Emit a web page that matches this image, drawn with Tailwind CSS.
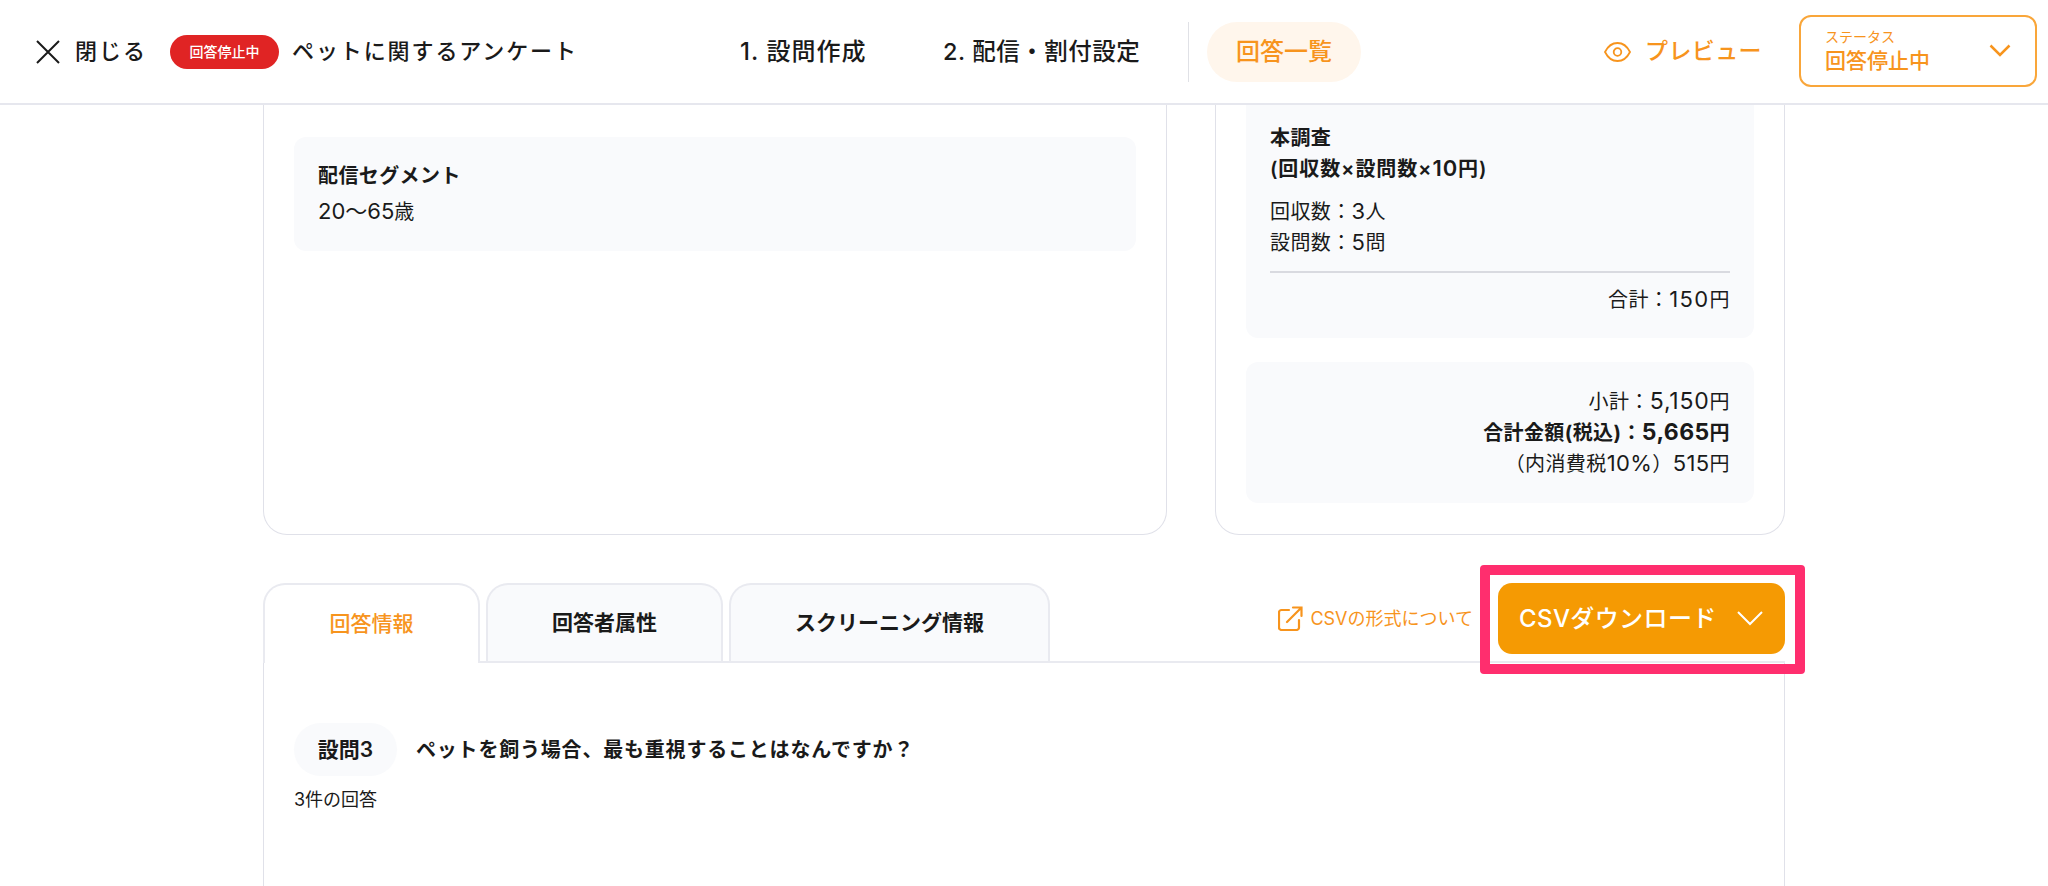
<!DOCTYPE html>
<html lang="ja">
<head>
    <meta charset="UTF-8">
    <title>ペットに関するアンケート</title>
    <script src="https://cdn.jsdelivr.net/npm/@tailwindcss/browser@4"></script>
</head>
<body class="h-[886px] overflow-hidden bg-white text-[#1a1a1a] font-['Inter','Noto_Sans_CJK_JP',sans-serif]">
    <!-- header -->
    <header class="h-[105px] border-b-2 border-[#e6e7ee] flex items-center pl-[36px] pr-[10px]">
        <button class="flex items-center gap-[16px] text-[22px] font-medium w-[134px] shrink-0">
            <svg class="w-[24px] h-[24px]" viewBox="0 0 24 24" fill="none" stroke="#1a1a1a" stroke-width="2"><path d="M1 1l22 22M23 1L1 23"/></svg>
            <span class="tracking-[2px] -ml-[1px]">閉じる</span>
        </button>
        <span class="w-[109px] h-[34px] rounded-full bg-[#e02424] text-white text-[14px] font-medium flex items-center justify-center shrink-0">回答停止中</span>
        <h1 class="ml-[13px] w-[448px] shrink-0 text-[22px] font-medium tracking-[1.9px]">ペットに関するアンケート</h1>
        <nav class="flex items-center font-medium">
            <a class="w-[203px] text-[24px] tracking-[1px]">1. 設問作成</a>
            <a class="w-[245px] text-[23.5px] tracking-[0.5px]">2. 配信・割付設定</a>
            <span class="h-[60px] border-l border-[#e0e1e6]"></span>
            <a class="ml-[18px] w-[154px] h-[60px] rounded-full bg-[#fff6ec] text-[#f7941d] text-[24px] flex items-center justify-center">回答一覧</a>
        </nav>
        <div class="ml-[243px] flex items-center gap-[14px] text-[#f7941d] text-[23px] font-medium tracking-[0.4px]">
            <svg class="w-[27px] h-[20px]" viewBox="0 0 27 20" fill="none" stroke="#f7941d" stroke-width="1.8"><path d="M1 10C4 4 8 1 13.500 1S23 4 26 10c-3 6-7 9-12.500 9S4 16 1 10z"/><circle cx="13.500" cy="10" r="3.800"/></svg>
            <span>プレビュー</span>
        </div>
        <div class="ml-[37px] -mt-[2px] w-[238px] h-[72px] border-2 border-[#f9a63a] rounded-[12px] flex items-center justify-between pl-[24px] pr-[24px] text-[#f7941d]">
            <div class="flex flex-col pt-[2px]">
                <span class="text-[14px] leading-[18px]">ステータス</span>
                <span class="text-[21px] leading-[30px] font-medium">回答停止中</span>
            </div>
            <svg class="w-[22px] h-[13px]" viewBox="0 0 22 13" fill="none" stroke="#f7941d" stroke-width="2.500"><path d="M1.500 1.500L11 11l9.500-9.500"/></svg>
        </div>
    </header>

    <main class="relative w-[1522px] mx-auto">
        <div class="flex justify-between">
            <!-- left card -->
            <section class="w-[904px] h-[430px] border border-t-0 border-[#e0e1e9] rounded-b-[24px] px-[30px] pt-[32px]">
                <div class="h-[114px] bg-[#f9fafc] rounded-[12px] px-[24px] pt-[24px]">
                    <p class="text-[20px] leading-[31px] font-semibold tracking-[0.4px]">配信セグメント</p>
                    <p class="text-[20px] leading-[31px] mt-[5px]"><span class="text-[22px] leading-none">20〜65</span>歳</p>
                </div>
            </section>
            <!-- right card -->
            <section class="w-[570px] h-[430px] border border-t-0 border-[#e0e1e9] rounded-b-[24px] px-[30px]">
                <div class="h-[233px] bg-[#f9fafc] rounded-b-[12px] px-[24px] pt-[18px]">
                    <p class="text-[20px] leading-[31px] font-semibold tracking-[0.4px]">本調査<br><span class="tracking-[0.9px]">(回収数×設問数×<span class="text-[22px] leading-none">10</span>円)</span></p>
                    <p class="text-[20px] leading-[31px] mt-[12px] tracking-[0.4px]">回収数：<span class="text-[22px] leading-none">3</span>人<br>設問数：<span class="text-[22px] leading-none">5</span>問</p>
                    <div class="border-t-2 border-[#d9dae0] mt-[12px] pt-[12px] text-right text-[20px] leading-[31px] tracking-[0.4px]">合計：<span class="text-[22px] leading-none tracking-[1.4px]">150</span>円</div>
                </div>
                <div class="mt-[24px] h-[141px] bg-[#f9fafc] rounded-[12px] px-[24px] pt-[25px] text-right text-[20px] leading-[31px] tracking-[0.4px]">
                    <p>小計：<span class="text-[23px] leading-none tracking-[0.8px]">5,150</span>円</p>
                    <p class="font-bold">合計金額(税込)：<span class="text-[23px] leading-none">5,665</span>円</p>
                    <p>（内消費税<span class="text-[22px] leading-none">10%</span>）<span class="text-[22px] leading-none">515</span>円</p>
                </div>
            </section>
        </div>

        <!-- tabs -->
        <div class="relative mt-[48px] flex items-start justify-between">
            <div class="flex items-end h-[80px] gap-[6px] flex-1 border-b-2 border-[#e9eaf0]">
                <div class="w-[217px] h-[80px] -mb-[2px] bg-white border-2 border-b-0 border-[#e9eaf0] rounded-t-[22px] flex items-center justify-center text-[21px] font-medium text-[#f7941d] pb-[1px]">回答情報</div>
                <div class="w-[237px] h-[78px] bg-[#f9fafc] border-2 border-b-0 border-[#e9eaf0] rounded-t-[22px] flex items-center justify-center text-[21px] font-semibold">回答者属性</div>
                <div class="w-[321px] h-[78px] bg-[#f9fafc] border-2 border-b-0 border-[#e9eaf0] rounded-t-[22px] flex items-center justify-center text-[21px] font-semibold">スクリーニング情報</div>
            </div>
            <div class="absolute right-0 top-0 flex items-center gap-[25px]">
                <a class="flex items-center gap-[7px] text-[18px] text-[#f7941d]">
                    <svg class="w-[25px] h-[25px]" viewBox="0 0 25 25" fill="none" stroke="#f7941d" stroke-width="2.200" stroke-linecap="round"><path d="M11 4H3.500A2.500 2.500 0 0 0 1 6.500v15A2.500 2.500 0 0 0 3.500 24h15a2.500 2.500 0 0 0 2.500-2.500V14M9 16L23 2M15 1.500h8.500V10"/></svg>
                    CSVの形式について
                </a>
                <button class="w-[287px] h-[71px] rounded-[14px] bg-[#f59a03] text-white text-[24px] font-medium tracking-[0.4px] flex items-center gap-[20px] pl-[21px]">
                    CSVダウンロード
                    <svg class="w-[26px] h-[15px]" viewBox="0 0 26 15" fill="none" stroke="#fff" stroke-width="2"><path d="M1 1l12 12L25 1"/></svg>
                </button>
            </div>
            <!-- highlight -->
            <div class="absolute -right-[20px] -top-[18px] w-[325px] h-[109px] border-[10px] border-[#ff2e6e] rounded-[4px]"></div>
        </div>

        <!-- answer panel -->
        <section class="h-[300px] border-x border-[#e0e1e9] px-[30px] pt-[60px]">
            <div class="flex items-center gap-[19px]">
                <span class="w-[103px] h-[53px] rounded-full bg-[#f9fafc] flex items-center justify-center text-[21px] font-semibold">設問3</span>
                <h2 class="text-[20px] font-semibold tracking-[0.8px]">ペットを飼う場合、最も重視することはなんですか？</h2>
            </div>
            <p class="mt-[10px] text-[18px] leading-[28px]">3件の回答</p>
        </section>
    </main>
</body>
</html>
